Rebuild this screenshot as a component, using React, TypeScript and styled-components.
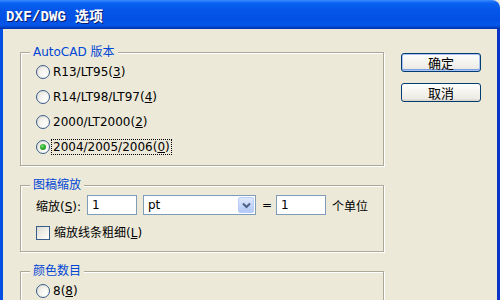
import styled, { createGlobalStyle } from 'styled-components';

const GlobalStyle = createGlobalStyle`
  html, body {
    margin: 0;
    padding: 0;
    background: #ece9d8;
  }
  body {
    font-family: 'DejaVu Sans', 'Noto Sans CJK SC', sans-serif;
    font-size: 12px;
    color: #000;
  }
`;

const Window = styled.div`
  width: 500px;
  height: 300px;
  overflow: hidden;
  display: flex;
  flex-direction: column;
  background: #ece9d8;
`;

const TitleBar = styled.div`
  flex: none;
  height: 29px;
  display: flex;
  align-items: center;
  padding-left: 6px;
  border-top-right-radius: 8px;
  background: linear-gradient(
    to bottom,
    #3a8cff 0,
    #0a62f2 3px,
    #0556e8 10px,
    #0251e4 20px,
    #0558ea 25px,
    #003cc0 28px,
    #002c9e 29px
  );
  color: #fff;
  font: bold 14px 'Liberation Mono', 'Noto Sans CJK SC', monospace;
  text-shadow: 1px 1px 0 #0a1a6a;
  letter-spacing: 0.2px;
`;

const Body = styled.div`
  flex: 1;
  display: flex;
  gap: 17px;
  padding: 16px 16px 0 17px;
  border-left: 3px solid #0050e6;
  border-right: 3px solid #0a34c8;
`;

const Main = styled.div`
  width: 364px;
  flex: none;
  display: flex;
  flex-direction: column;
  gap: 12px;
`;

const Group = styled.fieldset<{ $bottom: number }>`
  margin: 0;
  padding: 0 6px ${p => p.$bottom}px 15px;
  border: 1px solid #aca899;
  box-shadow: inset 1px 1px 0 #fff, 1px 1px 0 #fff;
  min-width: 0;
`;

const Legend = styled.legend`
  margin-left: -6px;
  padding: 0 3px;
  height: 14px;
  line-height: 14px;
  color: #0046d5;
  background: #ece9d8;
`;

const RadioRow = styled.div`
  height: 25px;
  display: flex;
  align-items: center;
  gap: 2px;
`;

const Radio = styled.span<{ $checked?: boolean }>`
  width: 12px;
  height: 12px;
  border-radius: 50%;
  border: 1px solid #3a5c8a;
  background: radial-gradient(circle at 70% 70%, #fff 0, #f4f3ee 45%, #d8d6cb 100%);
  display: flex;
  align-items: center;
  justify-content: center;
  flex: none;
  &::after {
    content: '';
    display: ${p => (p.$checked ? 'block' : 'none')};
    width: 6px;
    height: 6px;
    border-radius: 50%;
    background: radial-gradient(circle at 40% 35%, #6fdc6f 0, #21a121 60%, #16851a 100%);
  }
`;

const OptionText = styled.span<{ $focused?: boolean }>`
  line-height: 14px;
  padding: 0 1px;
  outline: ${p => (p.$focused ? '1px dotted #000' : 'none')};
`;

const U = styled.span`
  text-decoration: underline;
`;

const FieldRow = styled.div`
  margin-top: 3px;
  height: 20px;
  display: flex;
  align-items: center;
  gap: 6px;
`;

const FieldLabel = styled.span<{ $width?: number }>`
  width: ${p => (p.$width ? `${p.$width}px` : 'auto')};
  flex: none;
  white-space: nowrap;
`;

const TextBox = styled.div`
  width: 50px;
  height: 20px;
  box-sizing: border-box;
  border: 1px solid #7f9db9;
  background: #fff;
  padding-left: 4px;
  line-height: 18px;
  flex: none;
`;

const Select = styled.div`
  width: 113px;
  height: 20px;
  box-sizing: border-box;
  border: 1px solid #7f9db9;
  background: #fff;
  display: flex;
  align-items: stretch;
  flex: none;
`;

const SelectValue = styled.span`
  flex: 1;
  padding-left: 4px;
  line-height: 18px;
`;

const DropButton = styled.span`
  width: 16px;
  margin: 1px;
  border-radius: 2px;
  border: 1px solid #b9cdf6;
  box-sizing: border-box;
  background: linear-gradient(to bottom, #e0e9fd 0, #c6d6fb 50%, #b4c8f6 100%);
  display: flex;
  align-items: center;
  justify-content: center;
`;

const CheckRow = styled.div`
  margin-top: 7px;
  height: 21px;
  display: flex;
  align-items: center;
  gap: 3px;
`;

const CheckBox = styled.span`
  width: 12px;
  height: 12px;
  border: 1px solid #3a5c8a;
  background: linear-gradient(135deg, #dcdcd6 0, #f2f1ec 60%, #fff 100%);
  flex: none;
`;

const Side = styled.div`
  width: 80px;
  flex: none;
  padding-top: 8px;
  display: flex;
  flex-direction: column;
  gap: 11px;
`;

const Button = styled.div<{ $default?: boolean }>`
  height: 19px;
  box-sizing: border-box;
  border: 1px solid #003c74;
  border-radius: 3px;
  background: linear-gradient(to bottom, #fff 0, #f4f3ee 50%, #ecebe6 85%, #d6d0c5 100%);
  box-shadow: ${p =>
    p.$default ? 'inset 0 0 0 1px #a9c2f0, inset 0 -1px 0 1px #7ea1e2' : 'none'};
  display: flex;
  align-items: center;
  justify-content: center;
  font-size: 13px;
  font-family: 'Noto Sans CJK SC', sans-serif;
`;

const Chevron = () => (
  <svg width="9" height="7" viewBox="0 0 9 7">
    <path d="M1 1.5 L4.5 5 L8 1.5" fill="none" stroke="#4d6185" strokeWidth="2" />
  </svg>
);

const versions = [
  { text: 'R13/LT95', key: '3' },
  { text: 'R14/LT98/LT97', key: '4' },
  { text: '2000/LT2000', key: '2' },
  { text: '2004/2005/2006', key: '0', checked: true },
];

export default function App() {
  return (
    <>
      <GlobalStyle />
      <Window>
        <TitleBar>DXF/DWG 选项</TitleBar>
        <Body>
          <Main>
            <Group $bottom={6}>
              <Legend>AutoCAD 版本</Legend>
              {versions.map(v => (
                <RadioRow key={v.key}>
                  <Radio $checked={v.checked} />
                  <OptionText $focused={v.checked}>
                    {v.text}(<U>{v.key}</U>)
                  </OptionText>
                </RadioRow>
              ))}
            </Group>

            <Group $bottom={8}>
              <Legend>图稿缩放</Legend>
              <FieldRow>
                <FieldLabel $width={45}>
                  缩放(<U>S</U>):
                </FieldLabel>
                <TextBox>1</TextBox>
                <Select>
                  <SelectValue>pt</SelectValue>
                  <DropButton>
                    <Chevron />
                  </DropButton>
                </Select>
                <FieldLabel $width={8}>=</FieldLabel>
                <TextBox>1</TextBox>
                <FieldLabel>个单位</FieldLabel>
              </FieldRow>
              <CheckRow>
                <CheckBox />
                <OptionText>
                  缩放线条粗细(<U>L</U>)
                </OptionText>
              </CheckRow>
            </Group>

            <Group $bottom={6}>
              <Legend>颜色数目</Legend>
              <RadioRow>
                <Radio />
                <OptionText>
                  8(<U>8</U>)
                </OptionText>
              </RadioRow>
            </Group>
          </Main>
          <Side>
            <Button $default>确定</Button>
            <Button>取消</Button>
          </Side>
        </Body>
      </Window>
    </>
  );
}
